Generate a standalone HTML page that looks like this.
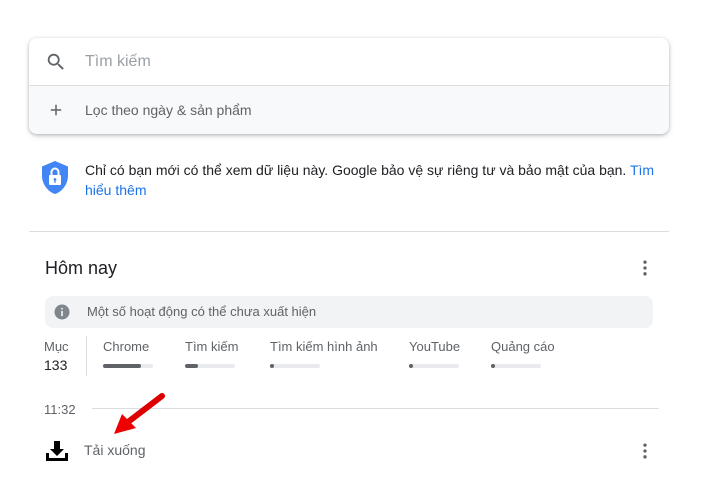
<!DOCTYPE html>
<html><head><meta charset="utf-8"><style>
*{margin:0;padding:0;box-sizing:border-box}
body{width:709px;height:479px;background:#fff;font-family:"Liberation Sans",Arial,sans-serif;position:relative;overflow:hidden}
.a{position:absolute}
.card{left:29px;top:38px;width:640px;height:96px;border-radius:8px;background:#fff;box-shadow:0 1px 3px rgba(60,64,67,.3),0 2px 6px rgba(60,64,67,.15);overflow:hidden}
.t{font-size:14px;color:#202124}
.bar{height:4px;border-radius:2px;background:#e8eaed;width:50px}
.bar i{display:block;height:4px;border-radius:2px;background:#5f6368}
.lab{font-size:13px;color:#5f6368}
</style></head><body>
<div class="a card">
 <div class="a" style="left:0;top:0;width:640px;height:48px;border-bottom:1px solid #dadce0"></div>
 <svg class="a" style="left:16px;top:13px" width="22" height="22" viewBox="0 0 24 24"><path fill="#5f6368" d="M15.5 14h-.79l-.28-.27A6.47 6.47 0 0 0 16 9.5 6.5 6.5 0 1 0 9.5 16c1.61 0 3.09-.59 4.23-1.57l.27.28v.79l5 4.99L20.49 19l-4.99-5zm-6 0C7.01 14 5 11.99 5 9.5S7.01 5 9.5 5 14 7.01 14 9.5 11.99 14 9.5 14z"/></svg>
 <div class="a" style="left:56px;top:15px;font-size:16px;color:#9aa0a6">Tìm kiếm</div>
 <div class="a" style="left:0;top:48px;width:640px;height:48px;background:#f8f9fa"></div>
 <svg class="a" style="left:18px;top:63px" width="18" height="18" viewBox="0 0 24 24"><path fill="#5f6368" d="M19 13h-6v6h-2v-6H5v-2h6V5h2v6h6v2z"/></svg>
 <div class="a" style="left:56px;top:64px;font-size:14px;color:#5f6368">Lọc theo ngày &amp; sản phẩm</div>
</div>
<svg class="a" style="left:39px;top:160px" width="32" height="36" viewBox="0 0 32 36"><path fill="#4285f4" d="M16 1L3 6.5v9C3 24 8.5 31.5 16 34c7.5-2.5 13-10 13-18.5v-9z"/><rect x="10" y="15" width="12" height="10" rx="1" fill="#fff"/><path d="M12.5 15v-3a3.5 3.5 0 0 1 7 0v3" stroke="#fff" stroke-width="2" fill="none"/><circle cx="16" cy="19.5" r="1.4" fill="#4285f4"/><rect x="15.4" y="20" width="1.2" height="3" fill="#4285f4"/></svg>
<div class="a t" style="left:85px;top:160px;width:570px;line-height:20px">Chỉ có bạn mới có thể xem dữ liệu này. Google bảo vệ sự riêng tư và bảo mật của bạn. <span style="color:#1a73e8">Tìm hiểu thêm</span></div>
<div class="a" style="left:29px;top:231px;width:640px;height:1px;background:#dadce0"></div>
<div class="a" style="left:45px;top:258px;font-size:18px;color:#202124">Hôm nay</div>
<svg class="a" style="left:635px;top:258px" width="20" height="20" viewBox="0 0 24 24"><circle cx="12" cy="5" r="2" fill="#5f6368"/><circle cx="12" cy="12" r="2" fill="#5f6368"/><circle cx="12" cy="19" r="2" fill="#5f6368"/></svg>
<div class="a" style="left:45px;top:296px;width:608px;height:32px;border-radius:8px;background:#f1f3f4"></div>
<svg class="a" style="left:53px;top:303px" width="18" height="18" viewBox="0 0 24 24"><circle cx="12" cy="12" r="10" fill="#80868b"/><rect x="11" y="10.5" width="2" height="7" fill="#fff"/><rect x="11" y="6.5" width="2" height="2" fill="#fff"/></svg>
<div class="a" style="left:87px;top:304px;font-size:13px;color:#5f6368">Một số hoạt động có thể chưa xuất hiện</div>
<div class="a lab" style="left:44px;top:339px">Mục</div>
<div class="a" style="left:44px;top:357px;font-size:14px;color:#202124">133</div>
<div class="a" style="left:86px;top:336px;width:1px;height:40px;background:#dadce0"></div>
<div class="a lab" style="left:103px;top:339px">Chrome</div><div class="a bar" style="left:103px;top:364px"><i style="width:38px"></i></div>
<div class="a lab" style="left:185px;top:339px">Tìm kiếm</div><div class="a bar" style="left:185px;top:364px"><i style="width:13px"></i></div>
<div class="a lab" style="left:270px;top:339px">Tìm kiếm hình ảnh</div><div class="a bar" style="left:270px;top:364px"><i style="width:4px"></i></div>
<div class="a lab" style="left:409px;top:339px">YouTube</div><div class="a bar" style="left:409px;top:364px"><i style="width:4px"></i></div>
<div class="a lab" style="left:491px;top:339px">Quảng cáo</div><div class="a bar" style="left:491px;top:364px"><i style="width:4px"></i></div>
<div class="a lab" style="left:44px;top:402px">11:32</div>
<div class="a" style="left:92px;top:408px;width:567px;height:1px;background:#dadce0"></div>
<svg class="a" style="left:45px;top:440px" width="24" height="22" viewBox="0 0 24 22"><path fill="#000" d="M9 1h6v8h4l-7 7-7-7h4z"/><path fill="#000" d="M1 13h3v5h16v-5h3v8H1z"/></svg>
<div class="a" style="left:84px;top:442px;font-size:14px;color:#5f6368">Tải xuống</div>
<svg class="a" style="left:635px;top:441px" width="20" height="20" viewBox="0 0 24 24"><circle cx="12" cy="5" r="2" fill="#5f6368"/><circle cx="12" cy="12" r="2" fill="#5f6368"/><circle cx="12" cy="19" r="2" fill="#5f6368"/></svg>
<svg class="a" style="left:100px;top:388px" width="70" height="50" viewBox="0 0 70 50"><path d="M62 8L28 34" stroke="#d00" stroke-width="6" stroke-linecap="round"/><path d="M36 40L14 46 22 26z" fill="#e00"/></svg>
</body></html>
